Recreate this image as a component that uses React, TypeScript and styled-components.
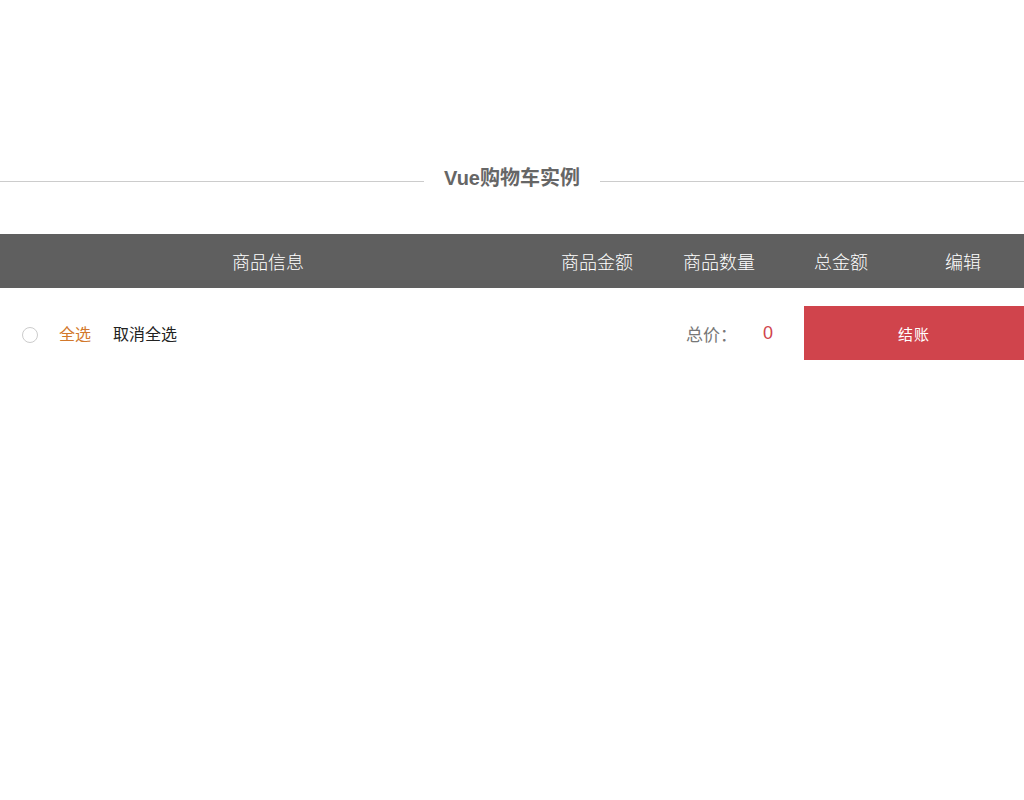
import React from "react";
import styled, { createGlobalStyle } from "styled-components";

const Global = createGlobalStyle`
  body { margin: 0; background: #fff; font-family: "Liberation Sans", "Noto Sans CJK SC", sans-serif; }
`;

const TitleRow = styled.div`
  display: flex; align-items: center; height: 40px; margin-top: 158px;
  &::before, &::after { content: ""; flex: 1; height: 1px; background: #ccc; margin-top: 6px; }
`;
const Title = styled.h1`
  margin: 0; padding: 0 20px; font-size: 20px; font-weight: bold; color: #666; line-height: 40px;
`;
const Header = styled.div`
  display: grid; grid-template-columns: 536px repeat(4, 1fr);
  height: 54px; margin-top: 36px; background: #5f5f5f;
`;
const HeadCell = styled.div`
  display: flex; align-items: center; justify-content: center;
  color: #fff; font-size: 18px; font-weight: 300;
`;
const Footer = styled.div`
  display: flex; align-items: center; height: 54px; margin-top: 18px; font-size: 16px;
`;
const Radio = styled.span`
  width: 14px; height: 14px; border: 1px solid #ccc; border-radius: 50%;
  margin: 4px 21px 0 22px;
`;
const Link = styled.span<{ $active?: boolean }>`
  color: ${p => (p.$active ? "#d2782c" : "#222")}; margin-right: 22px;
`;
const Spacer = styled.div`flex: 1;`;
const Label = styled.span`color: #777; font-size: 17px;`;
const Total = styled.span`color: #d0444c; font-size: 18px; margin: 0 31px 0 26px;`;
const Pay = styled.button`
  width: 220px; height: 54px; border: 0; background: #d0444c; color: #fff;
  font-size: 15px; font-family: inherit; letter-spacing: 1px;
`;

export default function App() {
  return (
    <>
      <Global />
      <TitleRow><Title>Vue购物车实例</Title></TitleRow>
      <Header>
        {["商品信息", "商品金额", "商品数量", "总金额", "编辑"].map(t => <HeadCell key={t}>{t}</HeadCell>)}
      </Header>
      <Footer>
        <Radio />
        <Link $active>全选</Link>
        <Link>取消全选</Link>
        <Spacer />
        <Label>总价：</Label>
        <Total>0</Total>
        <Pay>结账</Pay>
      </Footer>
    </>
  );
}
